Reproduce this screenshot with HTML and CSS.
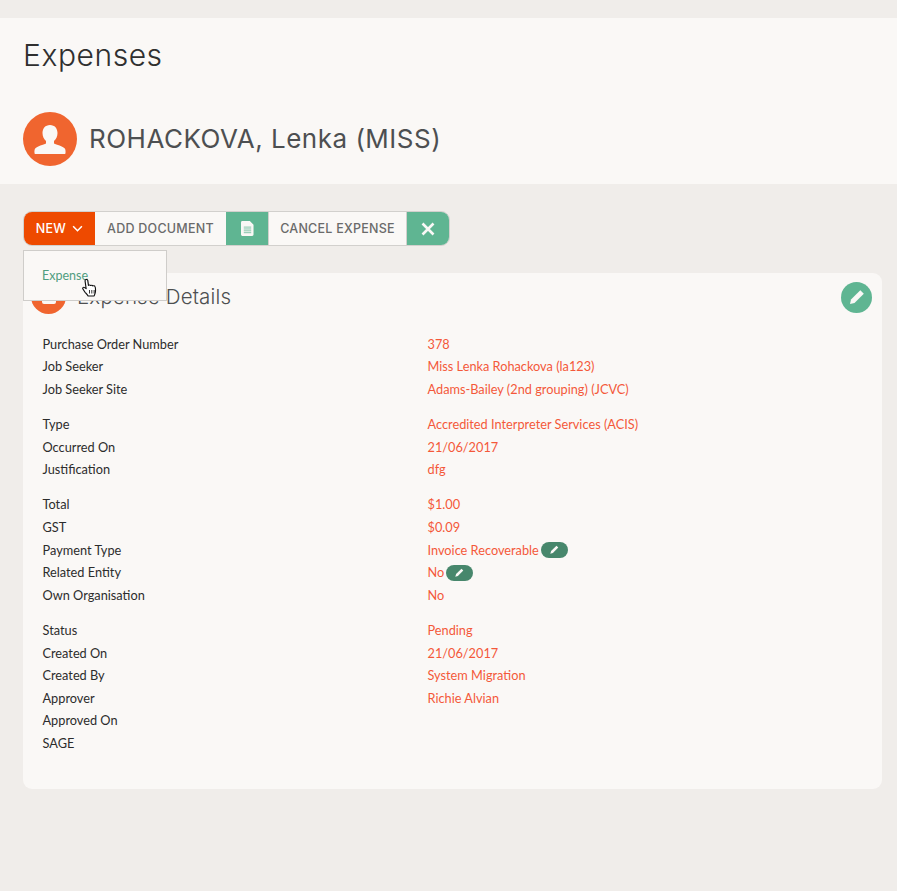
FILE: index.html
```html
<!DOCTYPE html>
<html lang="en">
<head>
<meta charset="utf-8">
<title>Expenses</title>
<link rel="stylesheet" href="styles.css">
</head>
<body>
<header class="page-head">
  <h1 class="title">Expenses</h1>
  <div class="person">
    <span class="avatar">
      <svg viewBox="0 0 54 54" width="54" height="54"><path fill="#faf8f6" d="M27 13c-4.800 0-7.500 3.600-7.500 8 0 3.500 1.500 6.400 3.500 8.100v2.300c-2.300 1.300-9 2.600-10.800 5.100-.7 1-.9 2.500-.7 4.500 0 .6.400 1 1 1h29c.6 0 1-.4 1-1 .2-2 0-3.500-.7-4.500-1.800-2.500-8.500-3.800-10.800-5.100v-2.300c2-1.700 3.500-4.600 3.500-8.100 0-4.400-2.700-8-7.500-8z"/></svg>
    </span>
    <h2 class="name">ROHACKOVA, Lenka (MISS)</h2>
  </div>
</header>

<main class="content">
  <div class="toolbar">
    <button class="tb tb-new">NEW
      <svg viewBox="0 0 12 8" width="11" height="7"><path d="M1 1.500l5 5 5-5" fill="none" stroke="#fff" stroke-width="1.800"/></svg>
    </button>
    <button class="tb tb-text tb-add">ADD DOCUMENT</button>
    <button class="tb tb-icon tb-doc">
      <svg viewBox="0 0 14 16" width="13" height="15"><path fill="#faf8f6" d="M1.500 0h8L13.500 4v10.500a1.500 1.500 0 0 1-1.500 1.500H1.500A1.500 1.500 0 0 1 0 14.500v-13A1.500 1.500 0 0 1 1.500 0z"/><path stroke="#5fb592" stroke-width=".8" d="M3 6.500h8M3 8.500h8M3 10.500h8M3 12.500h8"/></svg>
    </button>
    <button class="tb tb-text tb-cancel">CANCEL EXPENSE</button>
    <button class="tb tb-icon tb-x">
      <svg viewBox="0 0 14 14" width="14" height="14"><path d="M1.500 1.500l11 11M12.500 1.500l-11 11" stroke="#faf8f6" stroke-width="2.600" fill="none"/></svg>
    </button>
  </div>

  <section class="card">
    <div class="card-head">
      <span class="card-icon">
        <svg viewBox="0 0 14 14" width="14" height="14"><rect x="0" y="0" width="14" height="14" rx="2" fill="#faf8f6"/><path stroke="#f0652f" stroke-width="1" d="M3 5.500h8M3 8h8M3 10.500h8"/></svg>
      </span>
      <h3 class="card-title">Expense Details</h3>
      <button class="edit-round">
        <svg viewBox="0 0 16 16" width="16" height="16"><path fill="#faf8f6" d="M11.300 1.200l3.500 3.500-9.300 9.300-4.500 1 1-4.500z"/></svg>
      </button>
    </div>

    <dl class="group">
      <dt>Purchase Order Number</dt><dd>378</dd>
      <dt>Job Seeker</dt><dd>Miss Lenka Rohackova (la123)</dd>
      <dt>Job Seeker Site</dt><dd>Adams-Bailey (2nd grouping) (JCVC)</dd>
    </dl>
    <dl class="group">
      <dt>Type</dt><dd>Accredited Interpreter Services (ACIS)</dd>
      <dt>Occurred On</dt><dd>21/06/2017</dd>
      <dt>Justification</dt><dd>dfg</dd>
    </dl>
    <dl class="group">
      <dt>Total</dt><dd>$1.00</dd>
      <dt>GST</dt><dd>$0.09</dd>
      <dt>Payment Type</dt><dd>Invoice Recoverable<span class="pill"><svg viewBox="0 0 10 10" width="9" height="9"><path fill="#faf8f6" d="M7.200.8l2 2-6 6-2.900.9.900-2.900z"/></svg></span></dd>
      <dt>Related Entity</dt><dd>No<span class="pill"><svg viewBox="0 0 10 10" width="9" height="9"><path fill="#faf8f6" d="M7.200.8l2 2-6 6-2.900.9.900-2.900z"/></svg></span></dd>
      <dt>Own Organisation</dt><dd>No</dd>
    </dl>
    <dl class="group">
      <dt>Status</dt><dd>Pending</dd>
      <dt>Created On</dt><dd>21/06/2017</dd>
      <dt>Created By</dt><dd>System Migration</dd>
      <dt>Approver</dt><dd>Richie Alvian</dd>
      <dt>Approved On</dt><dd></dd>
      <dt>SAGE</dt><dd></dd>
    </dl>
  </section>

  <div class="menu"><a class="menu-item">Expense</a></div>
  <svg class="cursor" viewBox="0 0 13 18" width="15" height="18" preserveAspectRatio="none"><path fill="#fff" stroke="#111" stroke-width="1" stroke-linejoin="round" d="M3 .8c.8-.7 1.800-.3 2 .6l.6 5c.6-.6 1.500-.5 1.900.2.600-.5 1.500-.4 1.900.3.600-.4 1.500-.2 1.800.5.600 1.200.6 3.500.4 5.600-.1 1.400-.7 2.400-1.100 4H5.300c-.5-1.300-1.600-2.500-2.700-3.800L.8 9.900c-.6-1 .5-2 1.500-1.300l1.300 1.100L2.700 2.300c-.1-.6 0-1.100.3-1.500z"/><path stroke="#111" stroke-width=".8" d="M6.500 11v3.500M8.500 11v3.500M10.500 11v3.500"/></svg>
</main>
</body>
</html>
```

FILE: styles.css
```css
* { box-sizing: border-box; }
html, body { margin: 0; padding: 0; }
body {
  width: 897px;
  height: 891px;
  overflow: hidden;
  background: #f0edea;
  padding-top: 18px;
  font-family: Lato, "Liberation Sans", sans-serif;
  color: #2c2c2c;
}
h1, h2, h3, dl, dd, dt { margin: 0; padding: 0; }
button { border: 0; padding: 0; margin: 0; font: inherit; cursor: pointer; }

.page-head {
  background: #faf8f6;
  height: 166px;
  padding: 18px 23px 0;
}
.title {
  font-family: Inter, sans-serif;
  font-weight: 300;
  font-size: 30px;
  letter-spacing: .55px;
  line-height: 38px;
  color: #2f2f2f;
}
.person {
  display: flex;
  align-items: center;
  gap: 12px;
  margin-top: 38px;
}
.avatar {
  width: 54px;
  height: 54px;
  border-radius: 50%;
  background: #f0652f;
  display: block;
}
.avatar svg { display: block; }
.name {
  font-family: Inter, sans-serif;
  font-weight: 400;
  font-size: 26px;
  letter-spacing: .5px;
  color: #4d4f51;
  white-space: nowrap;
  margin-top: -2px;
}

.content { position: relative; padding: 27px 15px 0 23px; }

.toolbar {
  display: inline-flex;
  height: 35px;
  border: 1px solid #d2d0cd;
  border-radius: 9px;
  overflow: hidden;
  vertical-align: top;
}
.tb {
  height: 33px;
  display: flex;
  align-items: center;
  justify-content: center;
  font-family: Inter, sans-serif;
  font-size: 12.500px;
  font-weight: 500;
  letter-spacing: .25px;
}
.tb-new { width: 71px; background: #ee4a00; color: #fff; gap: 6px; }
.tb-text { background: #faf8f6; color: #6a6a6a; }
.tb-add { width: 131px; }
.tb-cancel { width: 139px; border-left: 1px solid #d2d0cd; border-right: 1px solid #d2d0cd; }
.tb-icon { background: #5fb592; }
.tb-doc { width: 42px; }
.tb-x { width: 42px; }

.card {
  margin-top: 27px;
  background: #faf8f6;
  border-radius: 9px;
  height: 516px;
  padding: 0 10px 0 19.500px;
}
.card-head {
  height: 59.800px;
  display: flex;
  align-items: center;
  margin-left: -11.500px;
}
.card-icon {
  width: 35px;
  height: 35px;
  border-radius: 50%;
  background: #f0652f;
  display: flex;
  align-items: center;
  justify-content: center;
  margin-top: -12px;
}
.card-title {
  font-family: Inter, sans-serif;
  font-weight: 300;
  font-size: 20.500px;
  letter-spacing: .15px;
  color: #4d4f51;
  margin-left: 11px;
  margin-top: -12px;
}
.edit-round {
  width: 31px;
  height: 31px;
  border-radius: 50%;
  background: #5fb592;
  display: flex;
  align-items: center;
  justify-content: center;
  margin-left: auto;
  margin-top: -11px;
}

.group {
  display: grid;
  grid-template-columns: 385px 1fr;
  grid-auto-rows: 22.600px;
  margin-bottom: 12.560px;
  font-size: 12.750px;
  line-height: 22.600px;
}
.group dt { color: #2c2c2c; }
.group dd { color: #f4583a; display: flex; align-items: center; }
.pill {
  width: 27px;
  height: 16px;
  border-radius: 8px;
  background: #47876c;
  margin-left: 2px;
  display: inline-flex;
  align-items: center;
  justify-content: center;
}

.menu {
  position: absolute;
  left: 23px;
  top: 66px;
  width: 144px;
  height: 51px;
  background: #faf8f6;
  border: 1px solid #cfcdca;
  padding: 16px 0 0 18px;
}
.menu-item {
  font-size: 12.500px;
  line-height: 18px;
  color: #4f9d80;
  display: block;
}
.cursor { position: absolute; left: 82px; top: 95px; }
```
